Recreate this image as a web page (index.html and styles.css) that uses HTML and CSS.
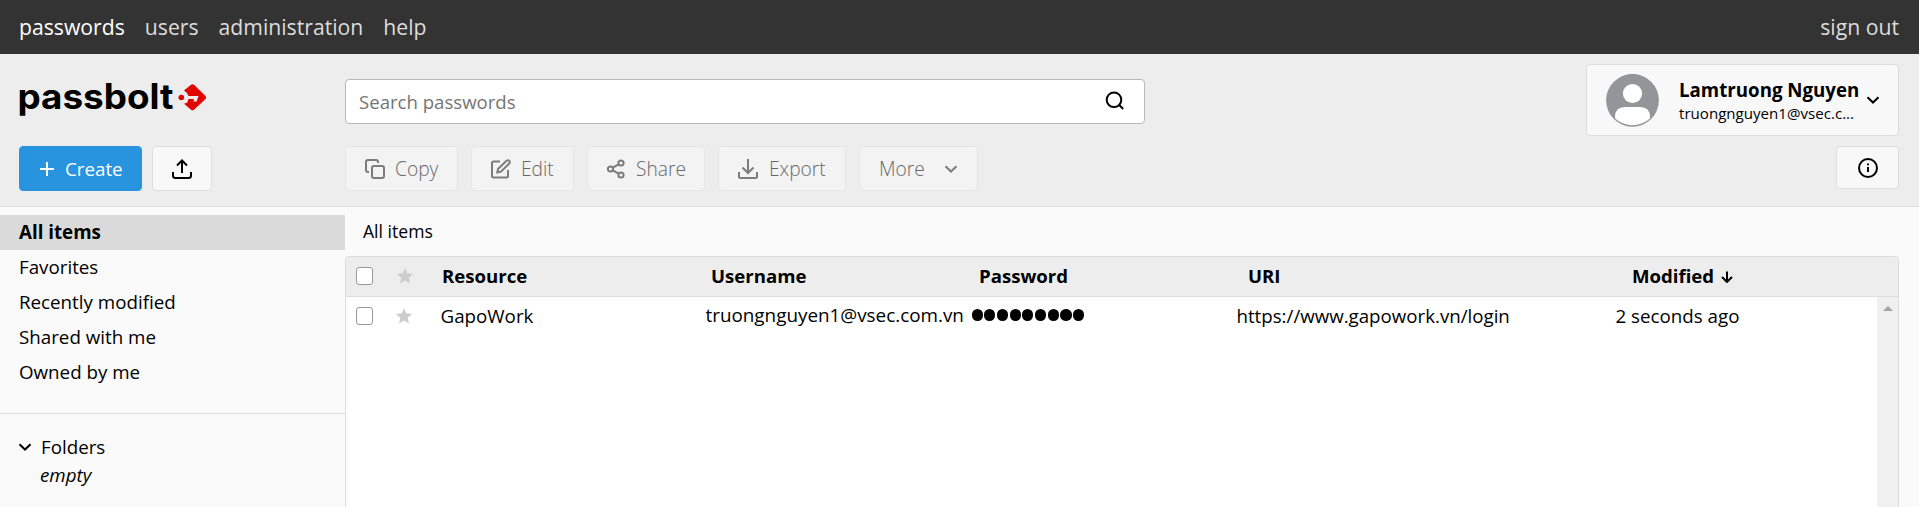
FILE: index.html
```html
<!DOCTYPE html>
<html lang="en">
<head>
<meta charset="utf-8">
<title>Passbolt</title>
<link rel="stylesheet" href="styles.css">
</head>
<body>
<nav class="topnav">
  <a class="nav-link active">passwords</a>
  <a class="nav-link">users</a>
  <a class="nav-link">administration</a>
  <a class="nav-link">help</a>
  <a class="nav-link signout">sign out</a>
</nav>
<header class="header">
  <div class="brand">
    <svg class="logo" width="190" height="56" viewBox="0 -12 190 56">
      <text class="logo-text" x="-1.5" y="26.5" textLength="156" lengthAdjust="spacingAndGlyphs">passbolt</text>
      <circle cx="162.300" cy="15.500" r="2.800" fill="#e10600"/>
      <path d="M165 8.500L172 2.800Q173.500 1.700 175 2.800L186.500 14Q187.800 15.500 186.500 17L175 27.700Q173.500 29 172 27.700L165 21.800L168.300 20.500L169.500 17H175L174.500 19.500H177.500L179.500 14H169.500L168 11Z" fill="#e10600"/>
    </svg>
  </div>
  <div class="search">
    <span class="placeholder">Search passwords</span>
    <svg class="search-icon" width="20" height="20" viewBox="0 0 20 20"><circle cx="9" cy="8.800" r="7.300"/><path d="M14.200 14L18.200 18"/></svg>
  </div>
  <div class="user">
    <svg class="avatar" width="53" height="53" viewBox="0 0 53 53">
      <clipPath id="face"><circle cx="26.500" cy="26" r="25.300"/></clipPath>
      <circle cx="26.500" cy="26.300" r="26.400" fill="#939598"/>
      <g clip-path="url(#face)" fill="#fff"><circle cx="26.500" cy="19.500" r="9.600"/><path d="M9 53V43Q9 33 19 33H34Q44 33 44 43V53Z"/></g>
    </svg>
    <div class="user-text">
      <span class="user-name">Lamtruong Nguyen</span>
      <span class="user-mail">truongnguyen1@vsec.c...</span>
    </div>
    <svg class="chevron" width="14" height="8" viewBox="0 0 14 8"><path d="M1.500 1.200L7 6.500L12.500 1.200"/></svg>
  </div>
  <div class="main-actions">
    <button class="btn primary"><svg width="14" height="14" viewBox="0 0 14 14"><path d="M7 0V14M0 7H14"/></svg><span class="label">Create</span></button>
    <button class="btn upload"><svg width="20" height="20" viewBox="0 0 20 20"><path d="M1 13V16.500Q1 19 3.500 19H16.500Q19 19 19 16.500V13M10 14V1.500M5 6.500L10 1.500L15 6.500"/></svg></button>
  </div>
  <div class="actions">
    <button class="btn disabled copy"><svg width="20" height="20" viewBox="0 0 20 20"><rect x="7" y="7" width="12" height="12" rx="2"/><path d="M4 13H3Q1 13 1 11V3Q1 1 3 1H11Q13 1 13 3V4"/></svg><span class="label">Copy</span></button>
    <button class="btn disabled edit"><svg width="20" height="20" viewBox="0 0 20 20"><path d="M9 2.500H2.500Q1 2.500 1 4V17Q1 18.500 2.500 18.500H15.500Q17 18.500 17 17V11M7 10L15.500 1.700Q17 .600 18.300 1.800Q19.400 3.200 18.200 4.500L10 12.700L6.300 13.500Z"/></svg><span class="label">Edit</span></button>
    <button class="btn disabled share"><svg width="18" height="20" viewBox="0 0 18 20"><circle cx="3.500" cy="10" r="2.600"/><circle cx="14" cy="4" r="2.600"/><circle cx="14" cy="16" r="2.600"/><path d="M5.800 8.700L11.700 5.300M5.800 11.300L11.700 14.700"/></svg><span class="label">Share</span></button>
    <button class="btn disabled export"><svg width="20" height="20" viewBox="0 0 20 20"><path d="M1 13V17.500Q1 19 2.500 19H17.500Q19 19 19 17.500V13M10 0V14M4.500 8.500L10 14L15.500 8.500"/></svg><span class="label">Export</span></button>
    <button class="btn disabled more"><span class="label">More</span><svg width="14" height="8" viewBox="0 0 14 8"><path d="M1.500 1.200L7 6.500L12.500 1.200"/></svg></button>
  </div>
  <button class="btn info"><svg width="20" height="20" viewBox="0 0 20 20"><circle cx="10" cy="10" r="9"/><path d="M10 9V14M10 5.500V7.300"/></svg></button>
</header>
<div class="panels">
  <aside class="sidebar">
    <ul class="filters">
      <li class="filter selected">All items</li>
      <li class="filter">Favorites</li>
      <li class="filter">Recently modified</li>
      <li class="filter">Shared with me</li>
      <li class="filter">Owned by me</li>
    </ul>
    <div class="folders">
      <div class="folders-title"><svg width="14" height="8" viewBox="0 0 14 8"><path d="M1.500 1.200L7 6.500L12.500 1.200"/></svg><span>Folders</span></div>
      <div class="folders-empty">empty</div>
    </div>
  </aside>
  <main class="main">
    <div class="crumbs">All items</div>
    <section class="table">
      <div class="row head">
        <span class="check"></span>
        <svg class="star" width="16" height="16" viewBox="0 0 16 16"><path d="M8 0L10.200 5.300L16 5.900L11.700 9.800L13 15.500L8 12.500L3 15.500L4.300 9.800L0 5.900L5.800 5.300Z"/></svg>
        <span class="cell">Resource</span><span class="cell">Username</span><span class="cell">Password</span><span class="cell">URI</span>
        <span class="cell sorted">Modified<svg width="12" height="12" viewBox="0 0 12 12"><path d="M6 .500V11M1 6L6 11L11 6"/></svg></span>
      </div>
      <div class="table-body">
        <div class="row item">
          <span class="check"></span>
          <svg class="star" width="16" height="16" viewBox="0 0 16 16"><path d="M8 0L10.200 5.300L16 5.900L11.700 9.800L13 15.500L8 12.500L3 15.500L4.300 9.800L0 5.900L5.800 5.300Z"/></svg>
          <span class="cell">GapoWork</span><span class="cell detail">truongnguyen1@vsec.com.vn</span><span class="secret"><i></i><i></i><i></i><i></i><i></i><i></i><i></i><i></i><i></i></span><span class="cell detail uri">https://www.gapowork.vn/login</span><span class="cell">2 seconds ago</span>
        </div>
        <div class="scrollbar"><span class="arrow-up"></span></div>
      </div>
    </section>
  </main>
</div>
</body>
</html>
```
FILE: styles.css
```css
* { box-sizing: border-box; }
body {
  margin: 0;
  height: 507px;
  overflow: hidden;
  display: flex;
  flex-direction: column;
  background: #fafafa;
  color: #000;
  font: 18.75px/35px "Open Sans", "Noto Sans", sans-serif;
}
svg { flex: none; display: block; fill: none; stroke: #000; stroke-width: 2; }
.topnav {
  flex: none;
  height: 54px;
  padding: 0 20px 0 19px;
  display: flex;
  gap: 20px;
  background: #333;
  font-size: 21.2px;
  line-height: 53px;
}
.nav-link { color: #ddd; }
.active { color: #fff; }
.signout { margin-left: auto; }
.header {
  flex: none;
  height: 153px;
  padding: 10px 20px 0 19px;
  display: grid;
  grid-template-columns: 326px 800px 1fr;
  grid-template-rows: 72px 45px;
  row-gap: 10px;
  background: #ededed;
  border-bottom: 1px solid #ddd;
}
.brand { padding-top: 6px; }
.logo { stroke: none; }
.logo-text { font: 700 35px Inter, sans-serif; fill: #000; }
.search {
  margin-top: 15px;
  height: 45px;
  padding: 0 19px 0 13px;
  display: flex;
  align-items: center;
  justify-content: space-between;
  background: #fff;
  border: 1px solid #b8b8b8;
  border-radius: 4px;
}
.placeholder { color: #757575; font-size: 18.6px; margin-bottom: 1px; }
.search-icon { margin-top: -1px; }
.user {
  justify-self: end;
  width: 313px;
  height: 72px;
  padding-left: 19px;
  display: flex;
  align-items: center;
  background: #f8f8f8;
  border: 1px solid #ddd;
  border-radius: 4px;
}
.avatar { stroke: none; }
.user-text { width: 187px; margin: 2px 0 0 20px; display: flex; flex-direction: column; white-space: nowrap; }
.user-name { font-weight: 700; font-size: 18.7px; line-height: 24px; }
.user-mail { font-size: 15.1px; line-height: 22px; }
.main-actions { display: flex; gap: 10px; }
.actions { display: flex; gap: 13px; }
.btn {
  height: 45px;
  padding: 0 0 0 19px;
  display: flex;
  align-items: center;
  background: #f8f8f8;
  border: 1px solid #ddd;
  border-radius: 4px;
  color: #000;
  font: 18.75px/35px "Open Sans", "Noto Sans", sans-serif;
}
.label { margin: 0 0 1px 10px; }
.primary { width: 123px; padding-left: 20px; background: #2894df; border-color: #2894df; color: #fff; }
.primary svg { stroke: #fff; }
.primary .label { margin-left: 11px; }
.upload { width: 60px; }
.disabled { background: #f3f3f3; border-color: #e6e6e6; color: #686868; font-weight: 300; font-size: 19.2px; }
.disabled svg { stroke: #7c7c7c; }
.copy { width: 113px; }
.edit { width: 103px; }
.share { width: 118px; }
.share .label { margin-left: 11px; }
.export { width: 128px; }
.export .label { margin-left: 11px; }
.more { width: 119px; }
.more .label { margin-left: 0; }
.more svg { margin-left: 19px; }
.info { justify-self: end; width: 63px; height: 43px; padding-left: 21px; }
.panels { flex: 1; min-height: 0; display: grid; grid-template-columns: 345px 1fr; }
.sidebar { padding-top: 8px; }
.filters { margin: 0; padding: 0 0 23px; list-style: none; border-bottom: 1px solid #ddd; }
.filter { height: 35px; padding-left: 19px; line-height: 34px; }
.selected { background: #dadada; font-weight: 700; }
.folders { padding: 17px 0 0 18px; }
.folders-title { display: flex; align-items: center; gap: 9px; line-height: 32px; }
.folders-empty { padding-left: 22px; font-style: italic; line-height: 23px; }
.main { display: flex; flex-direction: column; min-height: 0; padding-right: 20px; }
.crumbs { flex: none; height: 49px; padding-left: 18px; font-size: 17.6px; line-height: 48px; }
.table {
  flex: 1;
  display: flex;
  flex-direction: column;
  border: 1px solid #ddd;
  border-bottom: 0;
  border-radius: 4px 4px 0 0;
  background: #fff;
}
.row {
  height: 40px;
  display: grid;
  grid-template-columns: 41px 45px 269px 268px 269px 384px 1fr;
  align-items: center;
  padding-left: 10px;
  white-space: nowrap;
}
.cell { margin-bottom: 2px; }
.head { flex: none; background: #ededed; border-bottom: 1px solid #ddd; font-weight: 700; font-size: 18.6px; border-radius: 4px 4px 0 0; }
.check { width: 17px; height: 18px; margin-bottom: 1px; background: #fff; border: 1px solid #999; border-radius: 3px; }
.star { margin-bottom: 1px; fill: #ccc; stroke: none; }
.sorted { display: flex; align-items: center; gap: 7px; }
.sorted svg { margin-top: 2px; }
.table-body { flex: 1; display: flex; }
.item { flex: 1; height: 38px; grid-template-columns: 40px 44.5px 265px 266px 265px 379px 1fr; }
.detail { font-size: 18.85px; margin-bottom: 1px; }
.uri { font-size: 18.7px; }
.secret { display: flex; gap: 1.5px; margin-bottom: 2px; }
.secret i { width: 11.2px; height: 11.2px; border-radius: 50%; background: #000; }
.scrollbar { width: 21px; padding-top: 9px; background: #f0f0f0; }
.arrow-up { display: block; width: 0; margin: 0 auto; border: 5px solid transparent; border-top: 0; border-bottom-color: #a3a3a3; }
```
